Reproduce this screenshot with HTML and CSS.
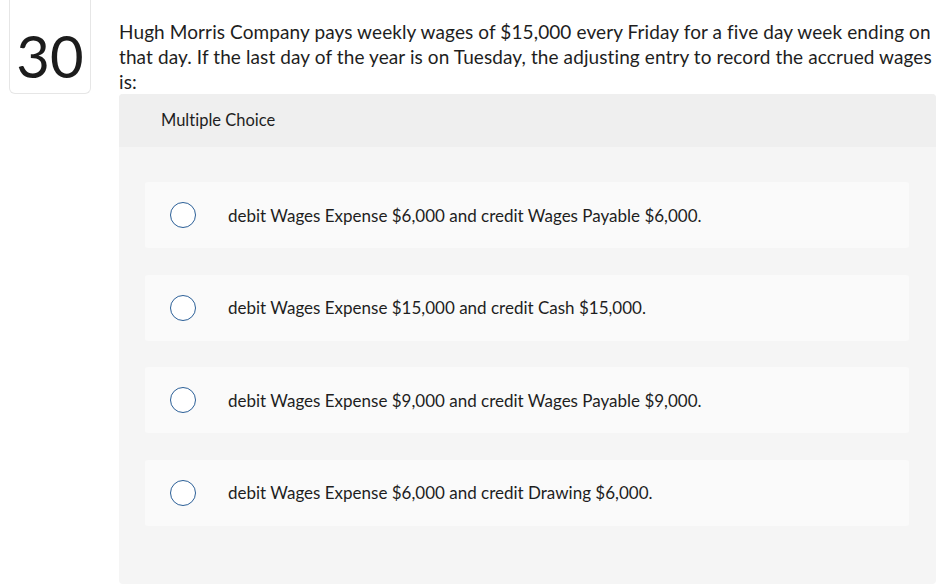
FILE: index.html
```html
<!DOCTYPE html>
<html>
<head>
<meta charset="utf-8">
<link rel="stylesheet" href="styles.css">
</head>
<body>
<div class="question">
  <div class="number">30</div>
  <div class="content">
    <p class="prompt">Hugh Morris Company pays weekly wages of $15,000 every Friday for a five day week ending on that day. If the last day of the year is on Tuesday, the adjusting entry to record the accrued wages is:</p>
    <div class="panel">
      <div class="panel-head">Multiple Choice</div>
      <div class="options">
        <label class="option"><span class="radio"></span><span class="opt-text">debit Wages Expense $6,000 and credit Wages Payable $6,000.</span></label>
        <label class="option"><span class="radio"></span><span class="opt-text">debit Wages Expense $15,000 and credit Cash $15,000.</span></label>
        <label class="option"><span class="radio"></span><span class="opt-text">debit Wages Expense $9,000 and credit Wages Payable $9,000.</span></label>
        <label class="option"><span class="radio"></span><span class="opt-text">debit Wages Expense $6,000 and credit Drawing $6,000.</span></label>
      </div>
    </div>
  </div>
</div>
</body>
</html>
```

FILE: styles.css
```css
* { box-sizing: border-box; }
body {
  margin: 0;
  background: #ffffff;
  font-family: "Lato", "Liberation Sans", sans-serif;
  color: #1e1e1e;
  overflow: hidden;
  font-variant-ligatures: none;
}
.question {
  display: flex;
  align-items: flex-start;
  padding-left: 9px;
  gap: 28px;
}
.number {
  width: 82px;
  height: 94px;
  flex: none;
  border: 1px solid #e6e6e6;
  border-top: none;
  border-radius: 0 0 6px 6px;
  display: flex;
  align-items: center;
  justify-content: center;
  font-size: 58px;
  padding-top: 17px;
  color: #1c1c1c;
}
.content {
  width: 817px;
  flex: none;
}
.prompt {
  margin: 0 -8px 0 0;
  padding-top: 19px;
  font-size: 19px;
  letter-spacing: 0.1px;
  line-height: 25px;
}
.panel {
  background: #f5f5f5;
  border-radius: 4px;
  height: 490px;
}
.panel-head {
  background: #efefef;
  height: 53px;
  padding-left: 42px;
  padding-top: 16px;
  font-size: 16.5px;
  border-radius: 4px 4px 0 0;
}
.options {
  padding: 35px 27px 0 26px;
  display: flex;
  flex-direction: column;
  gap: 26.5px;
}
.option {
  height: 66px;
  background: #fafafa;
  border-radius: 3px;
  display: flex;
  align-items: center;
  padding-left: 25px;
  font-size: 17px;
}
.radio {
  width: 26px;
  height: 26px;
  border: 1.5px solid #2b5f97;
  border-radius: 50%;
  background: #fff;
  flex: none;
  margin-right: 32px;
}
```
